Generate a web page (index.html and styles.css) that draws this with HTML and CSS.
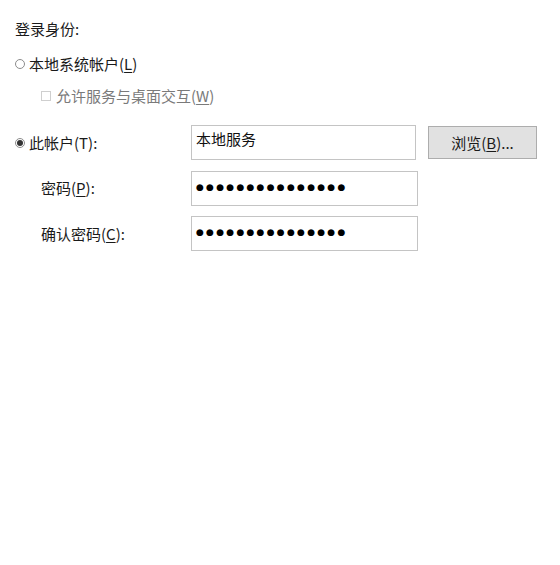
FILE: index.html
```html
<!DOCTYPE html>
<html lang="zh-CN">
<head>
<meta charset="utf-8">
<title>登录身份</title>
<link rel="stylesheet" href="styles.css">
</head>
<body>
<div class="page">
  <div class="title">登录身份:</div>
  <div class="opt">
    <span class="radio"></span>
    <span>本地系统帐户(<u>L</u>)</span>
  </div>
  <div class="opt sub disabled">
    <span class="check"></span>
    <span>允许服务与桌面交互(<u>W</u>)</span>
  </div>
  <div class="grid">
    <div class="opt">
      <span class="radio on"></span>
      <span>此帐户(T):</span>
    </div>
    <div class="field short"><span class="val">本地服务</span></div>
    <div class="btn">浏览(<u>B</u>)...</div>

    <div class="label">密码(<u>P</u>):</div>
    <div class="field"><span class="dots">●●●●●●●●●●●●●●●</span></div>
    <div></div>

    <div class="label">确认密码(<u>C</u>):</div>
    <div class="field"><span class="dots">●●●●●●●●●●●●●●●</span></div>
    <div></div>
  </div>
</div>
</body>
</html>
```
FILE: styles.css
```css
html, body {
  margin: 0;
  padding: 0;
  background: #ffffff;
}
body {
  font-family: "Noto Sans CJK SC", "Noto Sans", sans-serif;
  font-size: 15px;
  line-height: 20px;
  color: #1a1a1a;
}
.page {
  padding: 19px 15px 0 15px;
}
u {
  text-decoration-thickness: 1px;
  text-underline-offset: 2px;
}
.title {
  height: 20px;
}
.opt {
  display: flex;
  align-items: center;
  height: 20px;
}
.title + .opt {
  margin-top: 15px;
}
.opt.sub {
  margin-top: 12px;
  padding-left: 26px;
}
.disabled {
  color: #7a7a7a;
}
.radio {
  width: 8px;
  height: 8px;
  border: 1px solid #8c8c8c;
  border-radius: 50%;
  margin-right: 4px;
  position: relative;
  flex: none;
}
.radio.on::after {
  content: "";
  position: absolute;
  left: 1px;
  top: 1px;
  width: 6px;
  height: 6px;
  border-radius: 50%;
  background: #333;
}
.check {
  width: 8px;
  height: 8px;
  border: 1px solid #cfcfcf;
  margin-right: 5px;
  flex: none;
}
.grid {
  margin-top: 19px;
  display: grid;
  grid-template-columns: 166px 227px 109px;
  grid-auto-rows: 35px;
  column-gap: 10px;
  row-gap: 10.5px;
  align-items: center;
}
.grid .opt {
  height: 35px;
}
.label {
  padding-left: 26px;
}
.field {
  box-sizing: border-box;
  height: 35px;
  border: 1px solid #c4c4c4;
  padding: 3px 0 0 4px;
  display: flex;
  align-items: flex-start;
}
.field.short {
  width: 225px;
}
.val {
  color: #111;
}
.dots {
  font-family: "DejaVu Sans", sans-serif;
  font-size: 9px;
  letter-spacing: 2.25px;
  color: #000;
  margin-top: 7px;
  line-height: 10px;
}
.btn {
  box-sizing: border-box;
  height: 33px;
  background: #e1e1e1;
  border: 1px solid #adadad;
  display: flex;
  align-items: center;
  justify-content: center;
  color: #1a1a1a;
}
```
